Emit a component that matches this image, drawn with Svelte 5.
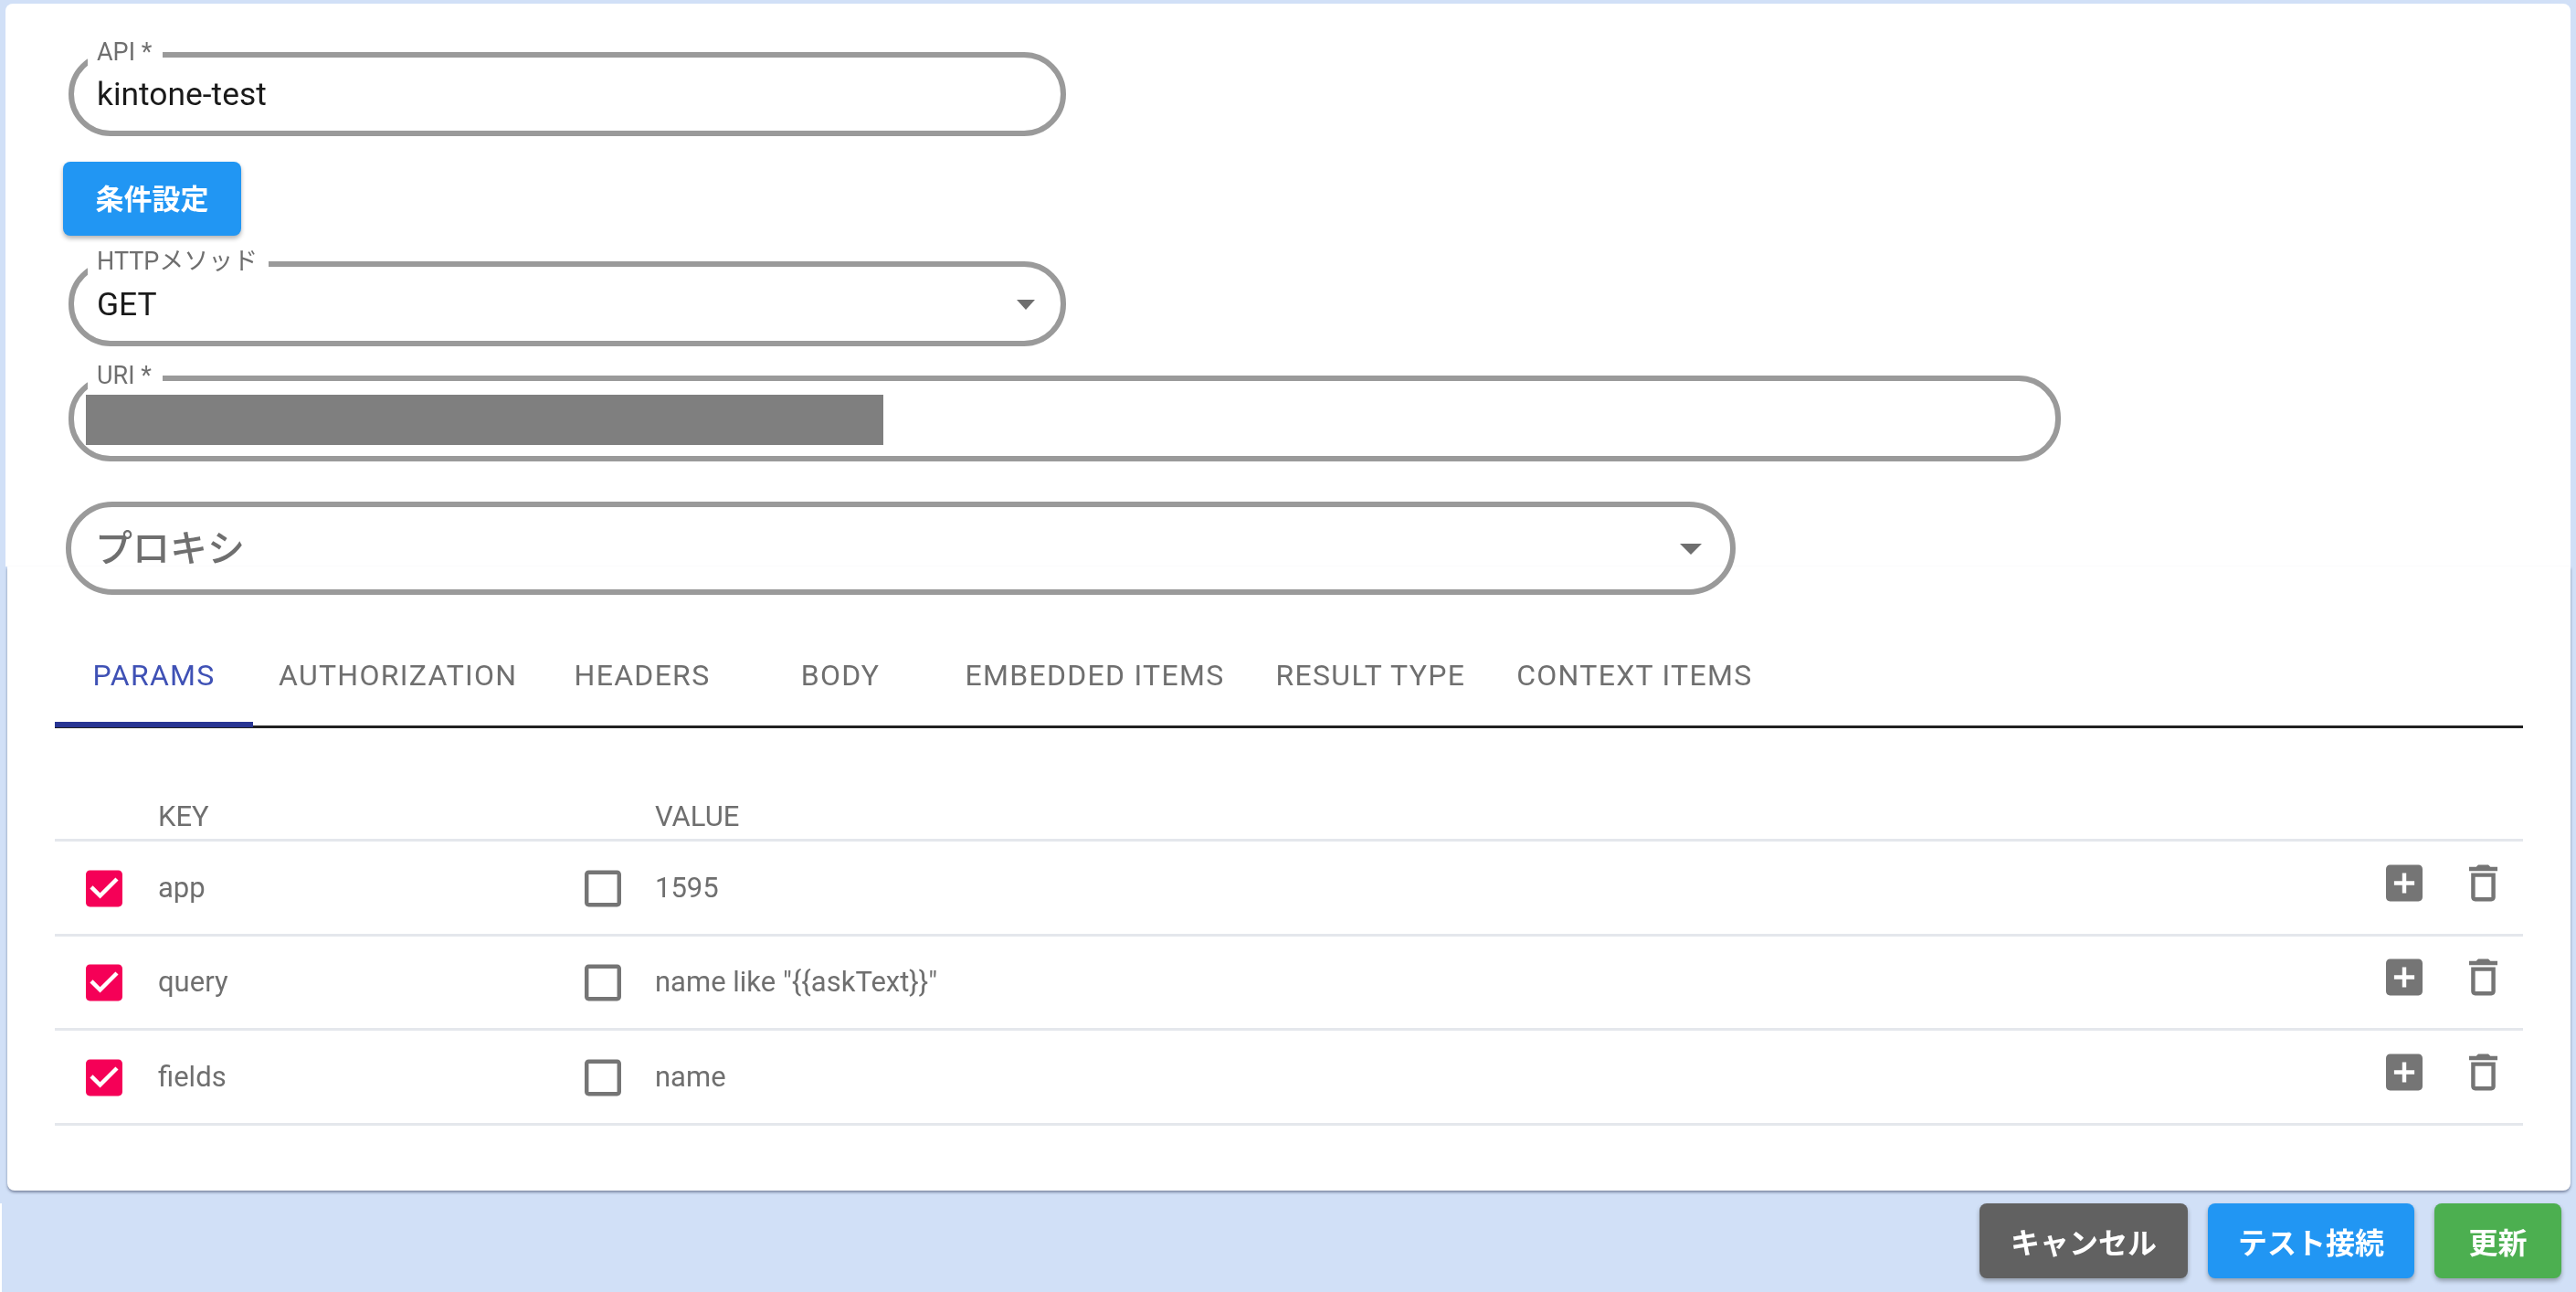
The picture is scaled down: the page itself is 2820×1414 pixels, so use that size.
<script>
  const tabs = ["PARAMS", "AUTHORIZATION", "HEADERS", "BODY", "EMBEDDED ITEMS", "RESULT TYPE", "CONTEXT ITEMS"];
  const params = [
    { key: "app", value: "1595" },
    { key: "query", value: 'name like "{{askText}}"' },
    { key: "fields", value: "name" }
  ];
</script>

{#snippet arrow()}
  <svg class="arrow" viewBox="7 10 10 5" preserveAspectRatio="none" aria-hidden="true"><path d="M7 10l5 5 5-5z" /></svg>
{/snippet}

<div class="page">
  <main class="card">
    <section class="form">
      <div class="field short">
        <span class="label">API *</span>
        <span class="value">kintone-test</span>
      </div>

      <button class="btn blue cond">条件設定</button>

      <div class="field short method">
        <span class="label">HTTPメソッド</span>
        <span class="value">GET</span>
        {@render arrow()}
      </div>

      <div class="field wide uri">
        <span class="label">URI *</span>
        <span class="redacted"></span>
      </div>

      <div class="field proxy">
        <span class="placeholder">プロキシ</span>
        {@render arrow()}
      </div>
    </section>

    <section class="lower">
      <nav class="tabs">
        {#each tabs as tab, i}
          <div class="tab" class:active={i === 0}>{tab}</div>
        {/each}
      </nav>

      <div class="row head">
        <span></span>
        <span>KEY</span>
        <span></span>
        <span>VALUE</span>
        <span></span>
      </div>

      {#each params as p}
        <div class="row">
          <svg class="check" viewBox="3 3 18 18" aria-hidden="true">
            <path fill="#f50057" d="M19 3H5c-1.11 0-2 .9-2 2v14c0 1.1.89 2 2 2h14c1.1 0 2-.9 2-2V5c0-1.1-.9-2-2-2zm-9 14l-5-5 1.41-1.41L10 14.17l7.59-7.59L19 8l-9 9z" />
          </svg>
          <span>{p.key}</span>
          <svg class="check" viewBox="3 3 18 18" aria-hidden="true">
            <path fill="#757575" d="M19 5v14H5V5h14m0-2H5c-1.1 0-2 .9-2 2v14c0 1.1.9 2 2 2h14c1.1 0 2-.9 2-2V5c0-1.1-.9-2-2-2z" />
          </svg>
          <span>{p.value}</span>
          <div class="actions">
            <svg class="add" viewBox="3 3 18 18" aria-hidden="true">
              <path d="M19 3H5c-1.11 0-2 .9-2 2v14c0 1.1.89 2 2 2h14c1.1 0 2-.9 2-2V5c0-1.1-.9-2-2-2zm-2 10h-4v4h-2v-4H7v-2h4V7h2v4h4v2z" />
            </svg>
            <svg class="trash" viewBox="5 3 14 18" aria-hidden="true">
              <path d="M6 19c0 1.1.9 2 2 2h8c1.1 0 2-.9 2-2V7H6v12zM8 9h8v10H8V9zm7.5-5l-1-1h-5l-1 1H5v2h14V4z" />
            </svg>
          </div>
        </div>
      {/each}
    </section>
  </main>

  <footer class="footer">
    <button class="btn grey cancel">キャンセル</button>
    <button class="btn blue test">テスト接続</button>
    <button class="btn green save">更新</button>
  </footer>
</div>

<style>
  :global(body) {
    background: #fff;
    font-family: Roboto, "Noto Sans CJK JP", sans-serif;
  }

  .page {
    height: 1414px;
    display: flex;
    flex-direction: column;
    overflow: hidden;
    filter: blur(0.5px);
  }

  .card {
    background: #d1e0f7;
    padding: 4px 6px 14px 8px;
  }

  .form,
  .lower {
    background: #fff;
  }

  .form {
    margin-left: -2px;
    padding: 53px 0 0 69px;
    height: 616px;
    box-sizing: border-box;
    border-radius: 8px 8px 0 0;
  }

  .lower {
    height: 683px;
    box-sizing: border-box;
    padding: 65px 52px 0 52px;
    border-radius: 0 0 8px 8px;
    box-shadow: 0 2px 3px rgba(70, 80, 110, 0.6);
  }

  .field {
    position: relative;
    box-sizing: border-box;
    display: flex;
    align-items: center;
    border: 6px solid #9a9a9a;
    border-radius: 46px;
    padding-left: 25px;
    margin-bottom: 32px;
  }

  .short {
    width: 1092px;
    height: 92px;
  }

  .method {
    height: 93px;
  }

  .wide {
    width: 2181px;
    height: 94px;
  }

  .uri {
    margin-bottom: 44px;
  }

  .proxy {
    width: 1828px;
    height: 102px;
    margin: 0 0 0 -3px;
    border-radius: 51px;
    padding-left: 26px;
  }

  .label {
    position: absolute;
    left: 15px;
    top: -21px;
    background: #fff;
    padding: 0 12px 0 10px;
    font-size: 27px;
    line-height: 30px;
    color: #6f6f6f;
  }

  .value {
    font-size: 35.4px;
    color: #1a1a1a;
  }

  .placeholder {
    font-size: 41px;
    font-weight: 500;
    color: #6f6f6f;
    padding-bottom: 6px;
  }

  .redacted {
    position: absolute;
    left: 13px;
    top: 15px;
    width: 873px;
    height: 55px;
    background: #7f7f7f;
  }

  .arrow {
    position: absolute;
    right: 28px;
    top: 50%;
    width: 20px;
    height: 11px;
    margin-top: -5px;
    fill: #6f6f6f;
  }

  .proxy .arrow {
    width: 24px;
    height: 12px;
    right: 31px;
    margin-top: -5px;
  }

  .btn {
    border: none;
    border-radius: 8px;
    color: #fff;
    font-family: inherit;
    font-size: 32px;
    font-weight: 700;
    padding: 0;
    box-shadow: 0 3px 5px rgba(0, 0, 0, 0.3);
  }

  .blue {
    background: #2196f3;
  }

  .grey {
    background: #616161;
  }

  .green {
    background: #4caf50;
  }

  .cond {
    display: block;
    width: 195px;
    height: 81px;
    margin: -4px 0 28px -6px;
    padding-bottom: 4px;
    font-size: 31px;
  }

  .tabs {
    display: flex;
    height: 112px;
    border-bottom: 3px solid #212121;
    margin-top: -3px;
  }

  .tab {
    position: relative;
    min-width: 217px;
    box-sizing: border-box;
    padding: 2px 28px 0;
    display: flex;
    align-items: center;
    justify-content: center;
    font-size: 32px;
    letter-spacing: 1.3px;
    color: #6f6f6f;
  }

  .tab.active {
    color: #3f51b5;
  }

  .tab.active::after {
    content: "";
    position: absolute;
    left: 0;
    right: 0;
    bottom: -2px;
    height: 6px;
    background: #283593;
  }

  .row {
    display: grid;
    grid-template-columns: 113px 467px 77px 1fr auto;
    align-items: center;
    height: 103.5px;
    box-sizing: border-box;
    border-bottom: 3px solid #e4e7ec;
    font-size: 31px;
    color: #6f6f6f;
  }

  .row.head {
    height: 124px;
    padding-top: 72px;
  }

  .check {
    width: 40px;
    height: 41px;
    margin-top: 2px;
  }

  .row > .check:first-child {
    margin-left: 34px;
  }

  .actions {
    display: flex;
    gap: 51px;
    padding-right: 28px;
    margin-top: -10px;
  }

  .add {
    width: 40px;
    height: 41px;
    fill: #757575;
  }

  .trash {
    width: 31px;
    height: 41px;
    fill: #757575;
  }

  .footer {
    flex: 1;
    margin-left: 2px;
    background: #d1e0f7;
    display: flex;
    justify-content: flex-end;
    gap: 22px;
    padding-right: 16px;
  }

  .footer .btn {
    height: 82px;
  }

  .cancel {
    width: 228px;
  }

  .test {
    width: 226px;
  }

  .save {
    width: 139px;
  }
</style>
